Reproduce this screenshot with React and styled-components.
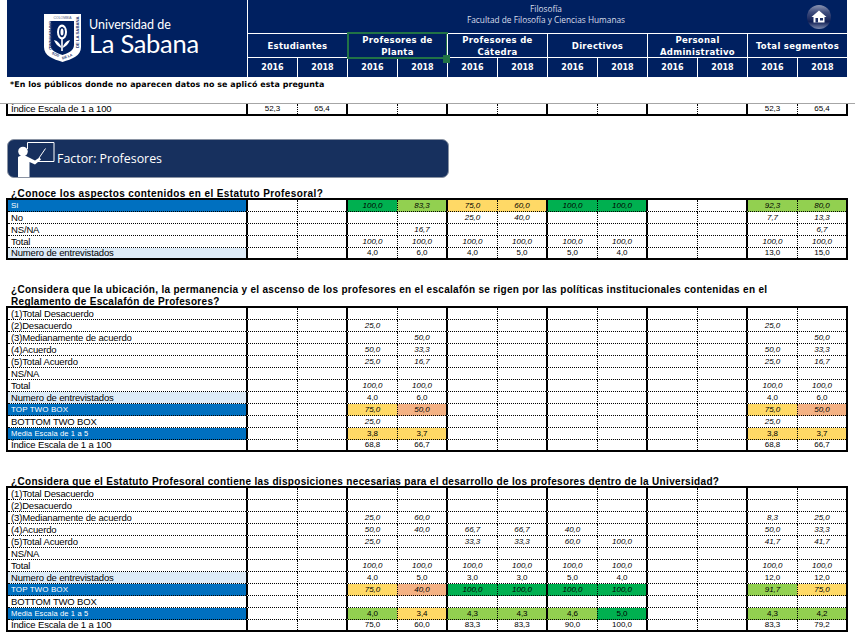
import React from 'react';
import styled, { createGlobalStyle } from 'styled-components';

const GlobalStyle = createGlobalStyle`
  html, body {
    margin: 0;
    padding: 0;
    background: #fff;
    overflow: hidden;
  }
  body {
    font-family: "Liberation Sans", Arial, sans-serif;
    color: #000;
  }
`;

const Sheet = styled.div`
  width: 855px;
  height: 643px;
  overflow: hidden;
`;

const Header = styled.header`
  margin-left: 7px;
  width: 840px;
  height: 77px;
  display: flex;
  background: #002060;
  color: #fff;
`;
const LogoCell = styled.div`
  width: 240px;
  display: flex;
  align-items: flex-start;
  padding: 14px 0 0 37px;
  box-sizing: border-box;
  gap: 8px;
`;
const Wordmark = styled.div`
  display: flex;
  flex-direction: column;
  font-family: Lato, sans-serif;
  font-weight: 400;
  white-space: nowrap;
`;
const WordSmall = styled.span`
  font-size: 12.5px;
  line-height: 13px;
  margin-top: 4px;
`;
const WordBig = styled.span`
  font-size: 25.5px;
  line-height: 24px;
  letter-spacing: -0.3px;
`;
const HeaderRight = styled.div`
  width: 600px;
  display: flex;
  flex-direction: column;
`;
const TopBand = styled.div`
  height: 33px;
  display: grid;
  grid-template-columns: 1fr auto 1fr;
  align-items: center;
  border-left: 1px solid #fff;
  border-bottom: 1px solid #fff;
  padding-right: 16px;
`;
const Faculty = styled.div`
  grid-column: 2;
  font-family: "Open Sans", sans-serif;
  font-size: 8.3px;
  line-height: 11px;
  text-align: center;
  color: #d9deea;
  white-space: nowrap;
  margin: 0 0 5px 13px;
`;
const HomeButton = styled.svg`
  justify-self: end;
  display: block;
`;
const GroupRow = styled.div`
  height: 23px;
  display: grid;
  grid-template-columns: repeat(6, 100px);
  border-bottom: 1px solid #fff;
`;
const GroupName = styled.div`
  position: relative;
  display: flex;
  align-items: center;
  justify-content: center;
  text-align: center;
  border-left: 1px solid #fff;
  font-family: "DejaVu Sans", sans-serif;
  font-weight: 700;
  font-size: 8.5px;
  line-height: 12px;
  letter-spacing: 0.3px;
  padding: 0 4px 2px;

  ${(p) => p.$selected && `
    &::after {
      content: '';
      position: absolute;
      left: -1px;
      top: -2px;
      width: 101px;
      height: 27px;
      box-sizing: border-box;
      border: 2px solid #217346;
    }
    &::before {
      content: '';
      position: absolute;
      right: -3px;
      bottom: -3px;
      width: 7px;
      height: 8px;
      background: #217346;
      z-index: 1;
    }
  `}
`;
const YearRow = styled.div`
  height: 19px;
  display: grid;
  grid-template-columns: repeat(12, 50px);
`;
const Year = styled.div`
  display: flex;
  align-items: center;
  justify-content: center;
  border-left: 1px solid #fff;
  font-family: "DejaVu Sans", sans-serif;
  font-weight: 700;
  font-size: 8px;
`;

const Note = styled.div`
  height: 26px;
  box-sizing: border-box;
  padding: 3px 0 0 10px;
  font-family: "DejaVu Sans", sans-serif;
  font-weight: 700;
  font-size: 7.9px;
  line-height: 10px;
  letter-spacing: 0.1px;
`;
const FreezeLine = styled.div`
  height: 1px;
  background: #a6a6a6;
`;

const Banner = styled.div`
  margin: 23px 0 8px 7px;
  width: 442px;
  height: 39px;
  box-sizing: border-box;
  display: flex;
  align-items: center;
  background: #17305e;
  border: 1px solid #8a93a3;
  border-radius: 7px;
  color: #fff;
  overflow: hidden;
`;
const BannerTitle = styled.span`
  font-family: "Open Sans", sans-serif;
  font-size: 12.4px;
  margin-left: -1px;
  padding-bottom: 1px;
`;

const Question = styled.h2`
  margin: 0 0 -2px 11px;
  padding-top: 2px;
  font-family: "Liberation Sans", Arial, sans-serif;
  font-weight: 700;
  font-size: 10px;
  line-height: 12px;
  letter-spacing: ${(p) => p.$spacing || '0.3px'};
  white-space: nowrap;
`;
const Section = styled.section`
  margin-bottom: 22px;
`;

const Table = styled.table`
  margin-left: 6px;
  width: 842px;
  box-sizing: border-box;
  table-layout: fixed;
  border-collapse: separate;
  border-spacing: 0;
  border: 2px solid #000;
  ${(p) => p.$frozen && 'border-top: 0;'}
`;
const labelFonts = {
  blue: { size: 8, spacing: 0.1, color: '#fff', bg: '#0070c0' },
  media: { size: 7.6, spacing: 0.1, color: '#fff', bg: '#0070c0' },
  pale: { size: 9.5, spacing: -0.15, color: '#000', bg: '#ddebf7' },
  plain: { size: 9.5, spacing: -0.15, color: '#000', bg: 'transparent' },
};
const LabelCell = styled.th`
  box-sizing: border-box;
  height: ${(p) => (p.$last ? 10 : 12)}px;
  padding: 0 0 0 3px;
  font-weight: 400;
  text-align: left;
  vertical-align: bottom;
  font-size: ${(p) => labelFonts[p.$kind || 'plain'].size}px;
  letter-spacing: ${(p) => labelFonts[p.$kind || 'plain'].spacing}px;
  color: ${(p) => labelFonts[p.$kind || 'plain'].color};
  background: ${(p) => labelFonts[p.$kind || 'plain'].bg};
  line-height: 10px;
  white-space: nowrap;
  overflow: hidden;
  border-bottom: ${(p) => (p.$last ? '0' : '1px dotted #000')};
`;
const fills = { dg: '#00b050', lg: '#92d050', y: '#ffd966', o: '#f4b183' };
const ValueCell = styled.td`
  box-sizing: border-box;
  height: ${(p) => (p.$last ? 10 : 12)}px;
  padding: 0;
  text-align: center;
  font-size: 8px;
  line-height: 10px;
  font-style: ${(p) => (p.$italic ? 'italic' : 'normal')};
  background: ${(p) => fills[p.$fill] || 'transparent'};
  border-left: ${(p) => (p.$groupStart ? '2px solid #000' : '1px dotted #000')};
  border-bottom: ${(p) => (p.$last ? '0' : '1px dotted #000')};
`;

const CrestLogo = () => (
  <svg width="37" height="48" viewBox="0 0 37 48" aria-hidden="true">
    <path d="M0 0H37V33C37 42 28 45 18.5 48C9 45 0 42 0 33Z" fill="#fff" />
    <path d="M6.500 7H30V31C30 37 24 39 18.500 41C13 39 6.500 37 6.500 31Z" fill="#002060" />
    <text x="18.5" y="4.600" fontSize="3.400" textAnchor="middle" fill="#4a5a85" fontFamily="Liberation Sans">COLOMBIA</text>
    <text transform="translate(1.500 7) rotate(90)" fontSize="4.200" fill="#26386f" fontFamily="Liberation Sans" fontWeight="700" y="-3">UNIVERSIDAD</text>
    <text transform="translate(35.500 34) rotate(-90)" fontSize="4.200" fill="#26386f" fontFamily="Liberation Sans" fontWeight="700" y="-0.500">DE LA SABANA</text>
    <text transform="translate(7.500 40) rotate(22)" fontSize="3.600" fill="#26386f" fontFamily="Liberation Sans" fontWeight="700">SOD</text>
    <text transform="translate(18.500 45.500) rotate(-20)" fontSize="3.600" fill="#26386f" fontFamily="Liberation Sans" fontWeight="700">DE LA</text>
    <ellipse cx="18" cy="18" rx="5" ry="7.500" fill="#fff" />
    <ellipse cx="18" cy="18" rx="3" ry="5.300" fill="#002060" />
    <ellipse cx="18" cy="18" rx="1.500" ry="3.500" fill="#fff" />
    <path d="M18 25V37" stroke="#fff" strokeWidth="1.600" />
    <path d="M10 26C12 31 15 33 17.500 34C16.500 30 14 27 10 26Z" fill="#fff" />
    <path d="M26 26C24 31 21 33 18.500 34C19.500 30 22 27 26 26Z" fill="#fff" />
  </svg>
);

const HomeIcon = () => (
  <HomeButton width="24" height="24" viewBox="0 0 24 24" aria-hidden="true">
    <defs>
      <linearGradient id="homeGlow" x1="0" y1="0" x2="0" y2="1">
        <stop offset="0%" stopColor="#8d96b2" />
        <stop offset="30%" stopColor="#3f4d7e" />
        <stop offset="70%" stopColor="#101f55" />
        <stop offset="100%" stopColor="#7c89ad" />
      </linearGradient>
    </defs>
    <circle cx="12" cy="12" r="12" fill="url(#homeGlow)" />
    <path d="M12 5.500L19.500 12H17.500V17.500H6.500V12H4.500Z" fill="#fff" />
    <rect x="8.500" y="13" width="2.500" height="4.500" fill="#1d2f66" />
    <rect x="13" y="13" width="3" height="2.500" fill="#1d2f66" />
  </HomeButton>
);

const TeacherIcon = () => (
  <svg width="50" height="37" viewBox="0 0 50 37" style={{ flex: 'none' }} aria-hidden="true">
    <path d="M19.500 9V2.500H46V21.500H30" fill="none" stroke="#fff" strokeWidth="1" />
    <circle cx="15" cy="11.500" r="4.800" fill="#fff" />
    <path d="M10 17.500C10 16 12 16 14 16H18L27 20.500L31.500 17.500L33 19.500L27 24.500L21.500 22V37H10Z" fill="#fff" />
    <path d="M31 18L37.500 8.500" stroke="#fff" strokeWidth="1" />
  </svg>
);

const groups = [
  { name: 'Estudiantes' },
  { name: 'Profesores de Planta', selected: true },
  { name: 'Profesores de Cátedra' },
  { name: 'Directivos' },
  { name: 'Personal Administrativo' },
  { name: 'Total segmentos' },
];

const blank = Array(12).fill('');
// only the columns with a value are listed, by column index
const cells = (values) => blank.map((b, i) => (values[i] !== undefined ? values[i] : b));

const frozenRow = [
  { label: 'Índice Escala de 1 a 100', values: cells({ 0: '52,3', 1: '65,4', 10: '52,3', 11: '65,4' }) },
];

const conoce = [
  {
    label: 'Si', kind: 'blue', italic: true,
    values: cells({ 2: ['100,0', 'dg'], 3: ['83,3', 'lg'], 4: ['75,0', 'y'], 5: ['60,0', 'y'], 6: ['100,0', 'dg'], 7: ['100,0', 'dg'], 10: ['92,3', 'lg'], 11: ['80,0', 'lg'] }),
  },
  { label: 'No', italic: true, values: cells({ 4: '25,0', 5: '40,0', 10: '7,7', 11: '13,3' }) },
  { label: 'NS/NA', italic: true, values: cells({ 3: '16,7', 11: '6,7' }) },
  { label: 'Total', italic: true, values: cells({ 2: '100,0', 3: '100,0', 4: '100,0', 5: '100,0', 6: '100,0', 7: '100,0', 10: '100,0', 11: '100,0' }) },
  { label: 'Numero de entrevistados', kind: 'pale', values: cells({ 2: '4,0', 3: '6,0', 4: '4,0', 5: '5,0', 6: '5,0', 7: '4,0', 10: '13,0', 11: '15,0' }) },
];

const ubicacion = [
  { label: '(1)Total Desacuerdo', italic: true, values: blank },
  { label: '(2)Desacuerdo', italic: true, values: cells({ 2: '25,0', 10: '25,0' }) },
  { label: '(3)Medianamente de acuerdo', italic: true, values: cells({ 3: '50,0', 11: '50,0' }) },
  { label: '(4)Acuerdo', italic: true, values: cells({ 2: '50,0', 3: '33,3', 10: '50,0', 11: '33,3' }) },
  { label: '(5)Total Acuerdo', italic: true, values: cells({ 2: '25,0', 3: '16,7', 10: '25,0', 11: '16,7' }) },
  { label: 'NS/NA', italic: true, values: blank },
  { label: 'Total', italic: true, values: cells({ 2: '100,0', 3: '100,0', 10: '100,0', 11: '100,0' }) },
  { label: 'Numero de entrevistados', kind: 'pale', values: cells({ 2: '4,0', 3: '6,0', 10: '4,0', 11: '6,0' }) },
  { label: 'TOP TWO BOX', kind: 'blue', italic: true, values: cells({ 2: ['75,0', 'y'], 3: ['50,0', 'o'], 10: ['75,0', 'y'], 11: ['50,0', 'o'] }) },
  { label: 'BOTTOM TWO BOX', italic: true, values: cells({ 2: '25,0', 10: '25,0' }) },
  { label: 'Media Escala de 1 a 5', kind: 'media', values: cells({ 2: ['3,8', 'y'], 3: ['3,7', 'y'], 10: ['3,8', 'y'], 11: ['3,7', 'y'] }) },
  { label: 'Índice Escala de 1 a 100', values: cells({ 2: '68,8', 3: '66,7', 10: '68,8', 11: '66,7' }) },
];

const disposiciones = [
  { label: '(1)Total Desacuerdo', italic: true, values: blank },
  { label: '(2)Desacuerdo', italic: true, values: blank },
  { label: '(3)Medianamente de acuerdo', italic: true, values: cells({ 2: '25,0', 3: '60,0', 10: '8,3', 11: '25,0' }) },
  { label: '(4)Acuerdo', italic: true, values: cells({ 2: '50,0', 3: '40,0', 4: '66,7', 5: '66,7', 6: '40,0', 10: '50,0', 11: '33,3' }) },
  { label: '(5)Total Acuerdo', italic: true, values: cells({ 2: '25,0', 4: '33,3', 5: '33,3', 6: '60,0', 7: '100,0', 10: '41,7', 11: '41,7' }) },
  { label: 'NS/NA', italic: true, values: blank },
  { label: 'Total', italic: true, values: cells({ 2: '100,0', 3: '100,0', 4: '100,0', 5: '100,0', 6: '100,0', 7: '100,0', 10: '100,0', 11: '100,0' }) },
  { label: 'Numero de entrevistados', kind: 'pale', values: cells({ 2: '4,0', 3: '5,0', 4: '3,0', 5: '3,0', 6: '5,0', 7: '4,0', 10: '12,0', 11: '12,0' }) },
  {
    label: 'TOP TWO BOX', kind: 'blue', italic: true,
    values: cells({ 2: ['75,0', 'y'], 3: ['40,0', 'o'], 4: ['100,0', 'dg'], 5: ['100,0', 'dg'], 6: ['100,0', 'dg'], 7: ['100,0', 'dg'], 10: ['91,7', 'lg'], 11: ['75,0', 'y'] }),
  },
  { label: 'BOTTOM TWO BOX', italic: true, values: blank },
  {
    label: 'Media Escala de 1 a 5', kind: 'media',
    values: cells({ 2: ['4,0', 'lg'], 3: ['3,4', 'y'], 4: ['4,3', 'lg'], 5: ['4,3', 'lg'], 6: ['4,6', 'lg'], 7: ['5,0', 'dg'], 10: ['4,3', 'lg'], 11: ['4,2', 'lg'] }),
  },
  { label: 'Índice Escala de 1 a 100', values: cells({ 2: '75,0', 3: '60,0', 4: '83,3', 5: '83,3', 6: '90,0', 7: '100,0', 10: '83,3', 11: '79,2' }) },
];

const DataTable = ({ rows, frozen }) => (
  <Table $frozen={frozen}>
    <colgroup>
      <col style={{ width: 238 }} />
      {blank.map((b, i) => <col key={i} style={{ width: i % 2 ? 49 : 51 }} />)}
    </colgroup>
    <tbody>
      {rows.map((row, r) => {
        const last = r === rows.length - 1;
        return (
          <tr key={row.label}>
            <LabelCell scope="row" $kind={row.kind} $last={last}>{row.label}</LabelCell>
            {row.values.map((v, i) => {
              const [text, fill] = Array.isArray(v) ? v : [v];
              return (
                <ValueCell key={i} $groupStart={i % 2 === 0} $italic={row.italic} $fill={fill} $last={last}>
                  {text}
                </ValueCell>
              );
            })}
          </tr>
        );
      })}
    </tbody>
  </Table>
);

const App = () => (
  <Sheet>
    <GlobalStyle />
    <Header>
      <LogoCell>
        <CrestLogo />
        <Wordmark>
          <WordSmall>Universidad de</WordSmall>
          <WordBig>La Sabana</WordBig>
        </Wordmark>
      </LogoCell>
      <HeaderRight>
        <TopBand>
          <Faculty>
            Filosofía<br />
            Facultad de Filosofía y Ciencias Humanas
          </Faculty>
          <HomeIcon />
        </TopBand>
        <GroupRow>
          {groups.map((g) => (
            <GroupName key={g.name} $selected={g.selected}>{g.name}</GroupName>
          ))}
        </GroupRow>
        <YearRow>
          {blank.map((b, i) => <Year key={i}>{i % 2 ? '2018' : '2016'}</Year>)}
        </YearRow>
      </HeaderRight>
    </Header>
    <Note>*En los públicos donde no aparecen datos no se aplicó esta pregunta</Note>
    <FreezeLine />
    <DataTable rows={frozenRow} frozen />

    <Banner>
      <TeacherIcon />
      <BannerTitle>Factor: Profesores</BannerTitle>
    </Banner>

    <Section>
      <Question $spacing="0.4px">¿Conoce los aspectos contenidos en el Estatuto Profesoral?</Question>
      <DataTable rows={conoce} />
    </Section>
    <Section>
      <Question>
        ¿Considera que la ubicación, la permanencia y el ascenso de los profesores en el escalafón se rigen por las políticas institucionales contenidas en el<br />
        Reglamento de Escalafón de Profesores?
      </Question>
      <DataTable rows={ubicacion} />
    </Section>
    <Section>
      <Question $spacing="0.32px">¿Considera que el Estatuto Profesoral contiene las disposiciones necesarias para el desarrollo de los profesores dentro de la Universidad?</Question>
      <DataTable rows={disposiciones} />
    </Section>
  </Sheet>
);

export default App;
